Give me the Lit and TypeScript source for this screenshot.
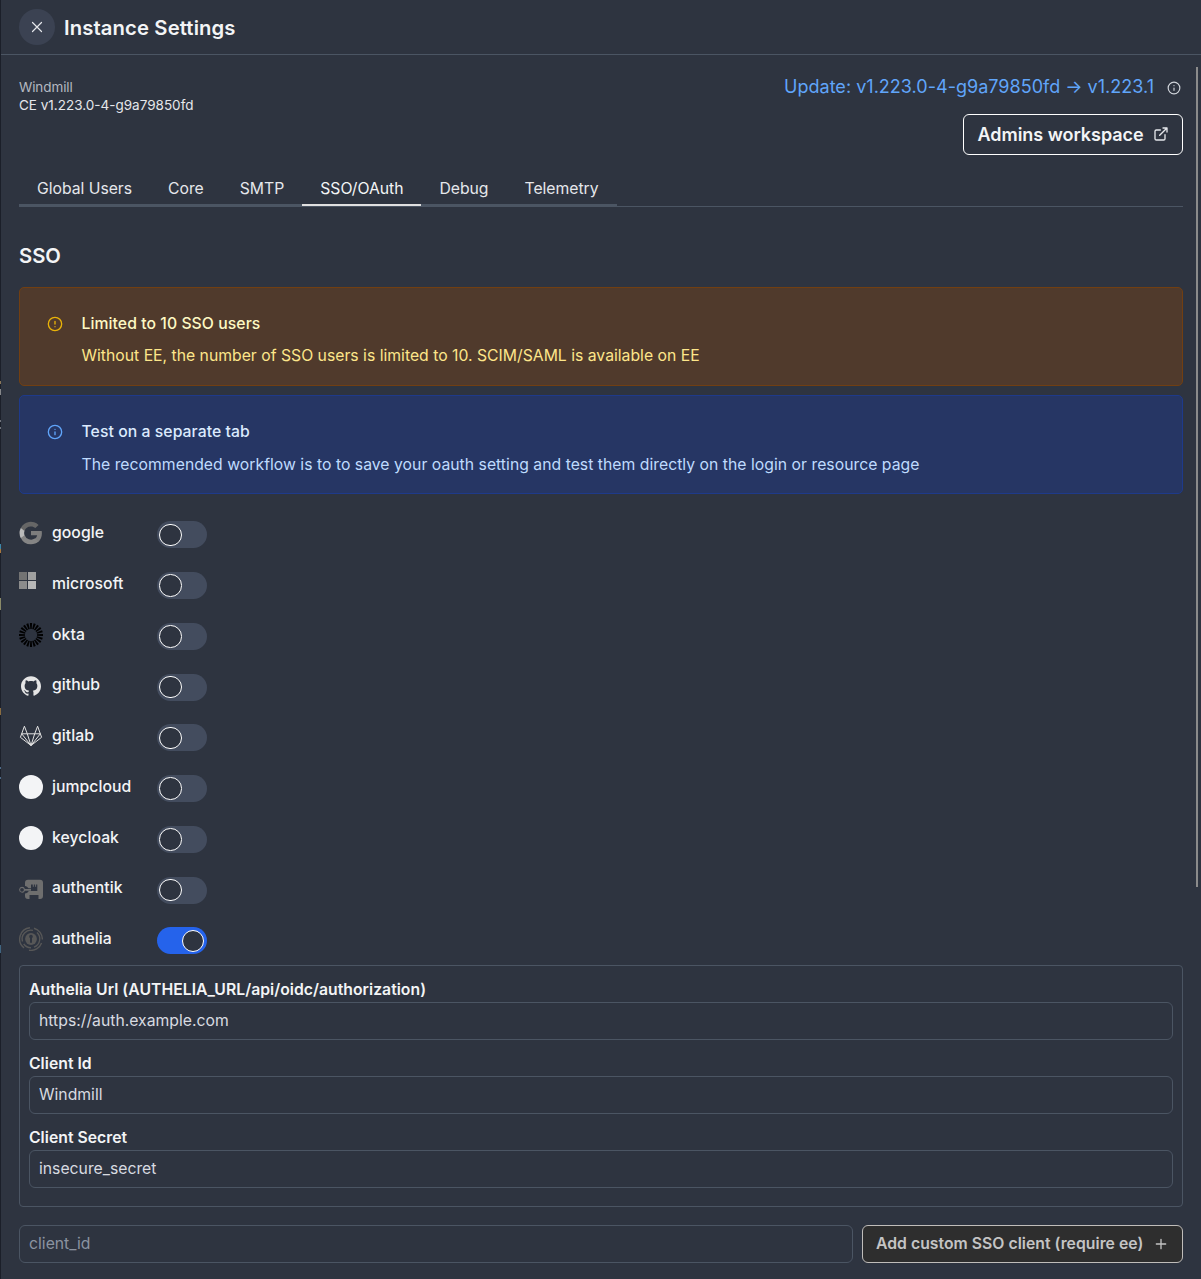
import { LitElement, html, css, svg } from "lit";
import { customElement } from "lit/decorators.js";

interface Provider { name: string; icon: unknown; on?: boolean }

const spokes = Array.from({ length: 20 }, (_, i) => i * 18);

const googleIcon = html`<svg class="logo" viewBox="0 0 24 24">
  <path fill="#7d7d7d" d="M22.900 12.300c0-.8-.1-1.500-.2-2.200H12v4.200h6.200a5.300 5.300 0 0 1-2.300 3.500v2.900h3.700c2.100-2 3.300-4.900 3.300-8.400z"/>
  <path fill="#858585" d="M12 23.200c3.100 0 5.600-1 7.500-2.700l-3.700-2.900a7 7 0 0 1-10.300-3.600H1.800v2.900A11.200 11.200 0 0 0 12 23.200z"/>
  <path fill="#bababa" d="M5.500 14.200a6.700 6.700 0 0 1 0-4.300V7H1.800a11.200 11.200 0 0 0 0 10.100z"/>
  <path fill="#666" d="M12 5.400c1.700 0 3.200.6 4.400 1.700l3.200-3.200A11.200 11.200 0 0 0 1.800 7l3.700 2.900A6.700 6.700 0 0 1 12 5.400z"/>
</svg>`;
const microsoftIcon = html`<svg class="logo ms" viewBox="0 0 17 17">
  <path fill="#737373" d="M0 0h8v8H0z"/><path fill="#a0a0a0" d="M9 0h8v8H9z"/>
  <path fill="#8c8c8c" d="M0 9h8v8H0z"/><path fill="#b7b7b7" d="M9 9h8v8H9z"/>
</svg>`;
const oktaIcon = html`<svg class="logo" viewBox="0 0 24 24">
  ${spokes.map((a) => svg`<path d="M10.900 0H13.100L12.700 6H11.300z" transform="rotate(${a} 12 12)"/>`)}
</svg>`;
const githubIcon = html`<svg class="logo pad" viewBox="0 0 24 24"><path fill="#e5e5e5" d="M12 .297c-6.630 0-12 5.373-12 12 0 5.303 3.438 9.800 8.205 11.385.6.113.82-.258.82-.577 0-.285-.01-1.040-.015-2.040-3.338.724-4.042-1.610-4.042-1.610C4.422 18.070 3.633 17.700 3.633 17.700c-1.087-.744.084-.729.084-.729 1.205.084 1.838 1.236 1.838 1.236 1.070 1.835 2.809 1.305 3.495.998.108-.776.417-1.305.76-1.605-2.665-.3-5.466-1.332-5.466-5.930 0-1.310.465-2.380 1.235-3.220-.135-.303-.54-1.523.105-3.176 0 0 1.005-.322 3.300 1.230.96-.267 1.980-.399 3-.405 1.020.006 2.040.138 3 .405 2.280-1.552 3.285-1.230 3.285-1.230.645 1.653.24 2.873.12 3.176.765.840 1.230 1.910 1.230 3.220 0 4.610-2.805 5.625-5.475 5.920.42.360.81 1.096.81 2.220 0 1.606-.015 2.896-.015 3.286 0 .315.21.690.825.570C20.565 22.092 24 17.592 24 12.297c0-6.627-5.373-12-12-12"/></svg>`;
const gitlabIcon = html`<svg class="logo" viewBox="0 0 24 24" fill="none" stroke="#e2e2e2" stroke-width="1" stroke-linejoin="round">
  <path d="M5.400 2.200L1.400 13.300L12 21.500L22.600 13.300L18.600 2.200L15.700 9.800H8.300z"/><path d="M8.300 9.800L12 21.500L15.700 9.800M2.700 9.800H8.300M15.700 9.800H21.300M2.700 9.800L12 21.500L21.300 9.800"/>
</svg>`;
const discIcon = html`<svg class="logo" viewBox="0 0 24 24"><circle cx="12" cy="12" r="12" fill="#f3f4f6"/></svg>`;
const authentikIcon = html`<svg class="logo" viewBox="0 0 24 24" fill="#6e6e6e">
  <path d="M9 2.700H21a3 3 0 0 1 3 3V19a3 3 0 0 1-3 3h-1.500v-4H10.500v4H9a3 3 0 0 1-3-3v-2.500c1.800-.3 3-1.200 3.700-2.600H18.300V7.500h-1.200v2.300h-1V7.500h-1.300v2.300h-1V7.500H12v3.700H9.500C8.700 10 7.500 9.300 6 9V5.700a3 3 0 0 1 3-3z"/>
  <path fill-rule="evenodd" d="M3 9.700a3 3 0 0 1 2.900 2.200H12v1.900H5.900A3 3 0 1 1 3 9.700zm0 1.200a1.900 1.900 0 1 0 0 3.800a1.900 1.900 0 0 0 0-3.800z"/>
</svg>`;
const autheliaIcon = html`<svg class="logo" viewBox="0 0 24 24" fill="none" stroke="#575757" stroke-width="1.400">
  <path d="M11 .8A11.300 11.300 0 0 0 5 20.900M15 1.200A11.300 11.300 0 0 1 23.300 12.500M22.600 16A11.300 11.300 0 0 1 10 23.200"/>
  <path d="M14 3.400A8.800 8.800 0 0 0 3.500 14.500M18 5.500A8.800 8.800 0 0 1 15 20.200M4.700 17A8.800 8.800 0 0 0 12 20.800"/>
  <circle cx="12" cy="12" r="5.900" fill="#575757" stroke="none"/>
  <path d="M12 7.800a1.800 1.800 0 0 1 1 3.300v4.700h-2v-4.700a1.800 1.800 0 0 1 1-3.300z" fill="#2e3440" stroke="none"/>
</svg>`;

const circleMark = (kind: "info" | "alert") => html`<svg class="mark" viewBox="0 0 24 24" fill="none" stroke="currentColor" stroke-width="2" stroke-linecap="round" stroke-linejoin="round">
  <circle cx="12" cy="12" r="10"/>${kind === "info" ? svg`<path d="M12 16v-4M12 8h.01"/>` : svg`<path d="M12 8v4M12 16h.01"/>`}
</svg>`;

@customElement("app-root")
export class AppRoot extends LitElement {
  static styles = css`
    :host { display: block; }
    * { box-sizing: border-box; }
    .page { width: 1201px; height: 1279px; overflow: hidden; position: relative; background: #2e3440; padding-left: 1px; color: #f3f4f6; font-family: Inter, "Liberation Sans", sans-serif; font-size: 15.75px; line-height: 22.5px; }
    .edge { position: absolute; left: 0; top: 0; width: 1px; height: 1279px; background: linear-gradient(#1b1f29 381px, #8a7658 381px 384px, #1b1f29 384px 389px, #85878a 389px 395px, #1b1f29 395px 420px, #70747c 420px 422px, #1b1f29 422px 427px, #70747c 427px 429px, #1b1f29 429px 544px, #3c86a8 544px 549px, #a8763c 549px 553px, #1b1f29 553px 598px, #8a8a68 598px 610px, #1b1f29 610px 708px, #8a6c40 708px 715px, #1b1f29 715px 767px, #4c6a88 767px 769px, #1b1f29 769px 777px, #4c6a88 777px 779px, #1b1f29 779px 945px, #3f6480 945px 953px, #1b1f29 953px); }
    .head { height: 55px; border-bottom: 1px solid #4b5563; display: flex; align-items: center; gap: 9px; padding: 0 18px 1px; }
    .close { width: 36px; height: 36px; border-radius: 50%; background: #3b4252; display: grid; place-items: center; }
    .close svg { width: 18px; height: 18px; }
    .title { font-size: 20.25px; font-weight: 600; line-height: 31px; margin-top: 2px; letter-spacing: .12px; }
    .body { padding: 0 18px; }
    .top { display: flex; justify-content: space-between; height: 114px; padding-top: 18px; }
    .version { font-size: 13.5px; line-height: 18px; padding-top: 5px; color: #e5e7eb; }
    .muted { color: #b4b8c0; letter-spacing: -.1px; }
    .right { display: flex; flex-direction: column; align-items: flex-end; }
    .update { display: flex; align-items: center; gap: 13px; color: #60a5fa; font-size: 18px; line-height: 27px; height: 41px; padding: 0 2px 14px 0; letter-spacing: .02px; }
    .update .mark { width: 14px; height: 14px; color: #d1d5db; margin-top: 3px; }
    .admin { height: 41px; width: 220px; border: 1px solid #fff; border-radius: 6px; display: flex; align-items: center; justify-content: space-between; padding: 0 13px 0 13.500px; font-size: 18px; font-weight: 600; letter-spacing: -.03px; }
    .admin span { padding-top: 2px; }
    .admin svg { width: 16px; height: 16px; margin-top: -2px; }
    .tabs { height: 38px; border-bottom: 1px solid #4b5563; display: flex; }
    .tab { height: 37px; padding: 9px 18px 0; border-bottom: 2px solid #4b5563; color: #e5e7eb; white-space: nowrap; letter-spacing: -.025px; }
    .tab.active { border-bottom-color: #e0e0e0; color: #f3f4f6; }
    h2 { margin: 33px 0 0; height: 47px; font-size: 20.25px; line-height: 31px; font-weight: 600; }
    .alert { height: 99px; border: 1px solid; border-radius: 5px; display: flex; padding: 25px 27px; gap: 18.500px; margin-bottom: 9px; }
    .alert .mark { width: 16px; height: 16px; margin-top: 3px; }
    .alert .heading { font-weight: 500; letter-spacing: .06px; }
    .alert .text { margin-top: 9.500px; }
    .warn { background: #503a2c; border-color: #713f12; color: #eab308; }
    .warn .heading { color: #fef9c3; }
    .warn .text { color: #fde68a; }
    .info { background: #263664; border-color: #1e3a8a; color: #60a5fa; }
    .info .heading { color: #dbeafe; }
    .info .text { color: #bfdbfe; margin-top: 10.500px; letter-spacing: .02px; }
    .rows { padding-top: 18.400px; height: 462px; }
    .row { height: 50.75px; display: flex; }
    .logo { width: 24px; height: 24px; display: block; }
    .logo.ms { width: 17px; height: 17px; }
    .logo.pad { padding: 2px; }
    .icon { width: 33px; }
    .label { width: 105px; font-weight: 500; line-height: 24px; margin-top: -.4px; letter-spacing: .04px; }
    .switch { width: 49.500px; height: 27px; border-radius: 14px; background: #434c5e; padding: 2.250px; display: flex; }
    .knob { width: 22.500px; height: 22.500px; border: 1px solid #fff; border-radius: 50%; background: #2e3440; }
    .switch.on { background: #2563eb; justify-content: flex-end; }
    .form { height: 242px; margin-top: -1px; border: 1px solid #4b5563; border-radius: 4px; padding: 13px 9px; }
    .rows { margin-bottom: .5px; }
    .field { height: 74px; font-weight: 600; line-height: 21px; letter-spacing: .02px; }
    .field input { margin-top: 2px; }
    input { display: block; width: 100%; height: 38px; border: 1px solid #4b5563; border-radius: 6px; background: #2e3440; color: #d8dbe0; font: 400 15.75px/22.5px Inter, "Liberation Sans", sans-serif; padding: 0 9px 1px; }
    input::placeholder { color: #8b93a1; opacity: 1; }
    .custom { display: flex; gap: 9px; margin-top: 18px; }
    .custom input { flex: 1; }
    .add { width: 321px; height: 38px; border: 1px solid #c0bdba; border-radius: 6px; background: #2e2e2e; color: #c4c4c4; display: flex; align-items: center; justify-content: space-between; padding: 1px 13px 0; font-weight: 600; white-space: nowrap; letter-spacing: .03px; }
    .add svg { width: 16px; height: 16px; }
    .scroll { position: absolute; right: 3px; top: 67px; width: 2px; height: 820px; background: #8b8b8b; }
  `;

  private providers: Provider[] = [
    { name: "google", icon: googleIcon },
    { name: "microsoft", icon: microsoftIcon },
    { name: "okta", icon: oktaIcon },
    { name: "github", icon: githubIcon },
    { name: "gitlab", icon: gitlabIcon },
    { name: "jumpcloud", icon: discIcon },
    { name: "keycloak", icon: discIcon },
    { name: "authentik", icon: authentikIcon },
    { name: "authelia", icon: autheliaIcon, on: true },
  ];

  render() {
    return html`<div class="page">
      <header class="head">
        <div class="close"><svg viewBox="0 0 24 24" fill="none" stroke="#e5e7eb" stroke-width="1.600" stroke-linecap="round"><path d="M18 6L6 18M6 6l12 12"/></svg></div>
        <div class="title">Instance Settings</div>
      </header>
      <main class="body">
        <div class="top">
          <div class="version"><div class="muted">Windmill</div><div>CE v1.223.0-4-g9a79850fd</div></div>
          <div class="right">
            <div class="update"><span>Update: v1.223.0-4-g9a79850fd → v1.223.1</span>${circleMark("info")}</div>
            <div class="admin"><span>Admins workspace</span><svg viewBox="0 0 24 24" fill="none" stroke="#e5e7eb" stroke-width="2" stroke-linecap="round" stroke-linejoin="round"><path d="M18 13v6a2 2 0 0 1-2 2H5a2 2 0 0 1-2-2V8a2 2 0 0 1 2-2h6M15 3h6v6M10 14L21 3"/></svg></div>
          </div>
        </div>
        <nav class="tabs">${["Global Users", "Core", "SMTP", "SSO/OAuth", "Debug", "Telemetry"].map((t) => html`<div class="tab ${t === "SSO/OAuth" ? "active" : ""}">${t}</div>`)}</nav>
        <h2>SSO</h2>
        <div class="alert warn">${circleMark("alert")}<div><div class="heading">Limited to 10 SSO users</div><div class="text">Without EE, the number of SSO users is limited to 10. SCIM/SAML is available on EE</div></div></div>
        <div class="alert info">${circleMark("info")}<div><div class="heading">Test on a separate tab</div><div class="text">The recommended workflow is to to save your oauth setting and test them directly on the login or resource page</div></div></div>
        <div class="rows">${this.providers.map((p) => html`<div class="row"><div class="icon">${p.icon}</div><div class="label">${p.name}</div><div class="switch ${p.on ? "on" : ""}"><div class="knob"></div></div></div>`)}</div>
        <div class="form">
          ${[["Authelia Url (AUTHELIA_URL/api/oidc/authorization)", "https://auth.example.com"], ["Client Id", "Windmill"], ["Client Secret", "insecure_secret"]].map(([l, v]) => html`<div class="field"><div>${l}</div><input .value=${v}></div>`)}
        </div>
        <div class="custom"><input placeholder="client_id"><div class="add"><span>Add custom SSO client (require ee)</span><svg viewBox="0 0 24 24" fill="none" stroke="currentColor" stroke-width="2" stroke-linecap="round"><path d="M5 12h14M12 5v14"/></svg></div></div>
      </main>
      <div class="edge"></div>
      <div class="scroll"></div>
    </div>`;
  }
}
